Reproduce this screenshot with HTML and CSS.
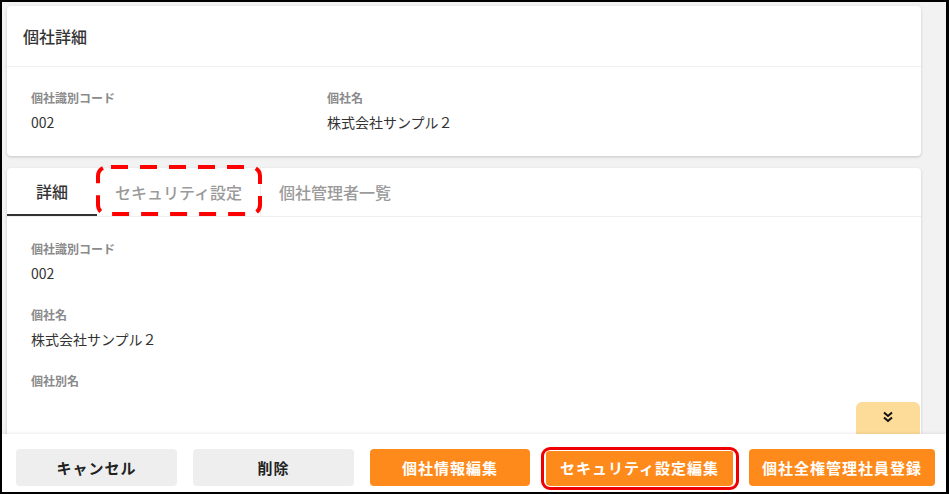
FILE: index.html
```html
<!DOCTYPE html>
<html lang="ja">
<head>
    <meta charset="UTF-8">
    <meta name="viewport" content="width=device-width, initial-scale=1.0">
    <title>個社詳細</title>
    <link rel="stylesheet" href="styles.css">
</head>
<body>

    <div class="frame">
        <div class="main">
            <div class="card">
                <div class="card-title">個社詳細</div>
                <div class="card-body fields-row">
                    <div class="field field-wide">
                        <div class="field-label">個社識別コード</div>
                        <div class="field-value">002</div>
                    </div>
                    <div class="field">
                        <div class="field-label">個社名</div>
                        <div class="field-value">株式会社サンプル２</div>
                    </div>
                </div>
            </div>

            <div class="card card-tabs">
                <div class="tabs">
                    <div class="tab active">詳細</div>
                    <div class="tab marked">
                        セキュリティ設定
                        <svg class="dash-mark" width="166" height="51" viewBox="0 0 166 51">
                            <rect x="2" y="2" width="162" height="47" rx="9" fill="none" stroke="#f00" stroke-width="4" stroke-dasharray="17 12" stroke-dashoffset="-4"/>
                        </svg>
                    </div>
                    <div class="tab">個社管理者一覧</div>
                </div>
                <div class="tab-body">
                    <div class="field">
                        <div class="field-label">個社識別コード</div>
                        <div class="field-value">002</div>
                    </div>
                    <div class="field">
                        <div class="field-label">個社名</div>
                        <div class="field-value">株式会社サンプル２</div>
                    </div>
                    <div class="field">
                        <div class="field-label">個社別名</div>
                        <div class="field-value"></div>
                    </div>
                </div>
            </div>

            <button class="scroll-button">
                <svg width="12" height="12" viewBox="0 0 12 12">
                    <path d="M2 1.5 L6 5 L10 1.5 M2 6.5 L6 10 L10 6.5" fill="none" stroke="#111" stroke-width="2"/>
                </svg>
            </button>
        </div>

        <div class="footer">
            <button class="btn btn-gray w161">キャンセル</button>
            <button class="btn btn-gray w161">削除</button>
            <button class="btn btn-orange w160">個社情報編集</button>
            <button class="btn btn-orange w187 marked-btn">セキュリティ設定編集</button>
            <button class="btn btn-orange w186">個社全権管理社員登録</button>
        </div>
    </div>

</body>
</html>
```

FILE: styles.css
```css
body {
    margin: 0;
    font-family: "Noto Sans CJK JP", "Noto Sans", sans-serif;
    color: #333;
}
.frame {
    width: 949px;
    height: 494px;
    box-sizing: border-box;
    border: 2px solid #000;
    border-right-width: 3px;
    background-color: #f2f2f2;
    display: flex;
    flex-direction: column;
    overflow: hidden;
}
.main {
    flex: 1;
    position: relative;
    overflow: hidden;
    padding: 4px 25px 0 5px;
}
.card {
    background-color: #fff;
    border-radius: 4px;
    box-shadow: 0 1px 3px rgba(0,0,0,0.18);
}
.card-title {
    height: 60px;
    line-height: 60px;
    padding-left: 16px;
    font-size: 16px;
    font-weight: 500;
    border-bottom: 1px solid #f0f0f0;
}
.card-body {
    height: 89px;
    box-sizing: border-box;
    padding: 22px 24px 0;
}
.fields-row {
    display: flex;
}
.field-wide {
    width: 296px;
}
.field-label {
    font-size: 12px;
    font-weight: bold;
    color: #8a8a8a;
    line-height: 18px;
}
.field-value {
    font-size: 14px;
    line-height: 20px;
    margin-top: 5px;
    min-height: 20px;
}
.card-tabs {
    margin-top: 12px;
    height: 300px;
}
.tabs {
    display: flex;
    height: 48px;
    border-bottom: 1px solid #eee;
}
.tab {
    min-width: 90px;
    box-sizing: border-box;
    padding: 0 18px;
    text-align: center;
    line-height: 48px;
    font-size: 16px;
    font-weight: 500;
    color: #9a9a9a;
    position: relative;
}
.tab.active {
    color: #333;
    border-bottom: 2px solid #333;
    line-height: 46px;
}
.tab.marked {
    border-right: 1px solid #eee;
}
.dash-mark {
    position: absolute;
    left: -1px;
    top: -3px;
}
.tab-body {
    padding: 23px 24px 0;
}
.tab-body .field {
    margin-bottom: 23px;
}
.scroll-button {
    position: absolute;
    right: 26px;
    bottom: -4px;
    width: 64px;
    height: 36px;
    border: none;
    border-radius: 6px 6px 0 0;
    background-color: #fddb98;
    padding: 0;
    padding-bottom: 4px;
}
.footer {
    height: 58px;
    background-color: #fff;
    box-shadow: 0 -1px 3px rgba(0,0,0,0.08);
    display: flex;
    align-items: flex-start;
    gap: 16px;
    padding: 15px 0 0 14px;
    box-sizing: border-box;
    position: relative;
}
.btn {
    height: 37px;
    border: none;
    border-radius: 4px;
    font-family: "Noto Sans CJK JP", "Noto Sans", sans-serif;
    font-size: 15px;
    font-weight: bold;
    letter-spacing: 1px;
    padding: 0;
}
.btn-gray {
    background-color: #eeeeee;
    color: #222;
}
.btn-orange {
    background-color: #ff8a1c;
    color: #fff;
}
.w160 { width: 160px; }
.w161 { width: 161px; }
.w186 { width: 186px; }
.w187 { width: 187px; }
.marked-btn {
    position: relative;
}
.marked-btn::after {
    content: "";
    position: absolute;
    left: -5px;
    right: -6px;
    top: -2px;
    bottom: -4px;
    border: 3px solid #e00;
    border-radius: 9px;
    box-shadow: inset 0 0 0 1px #fff;
}
```
